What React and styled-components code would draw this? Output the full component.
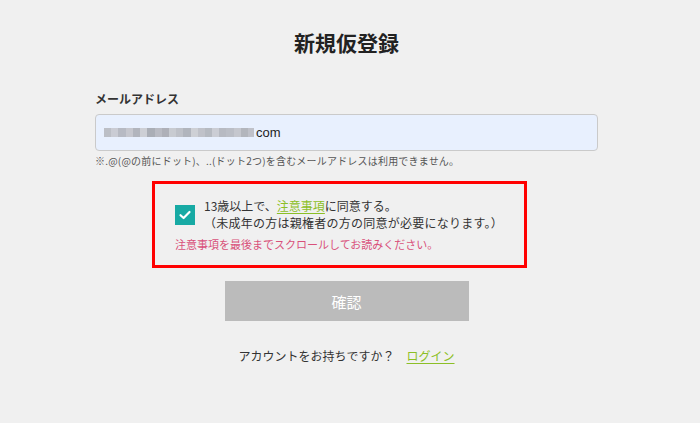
import React from "react";
import styled, { createGlobalStyle } from "styled-components";

const GlobalStyle = createGlobalStyle`
    body {
        margin: 0;
        background: #f0f0f0;
        font-family: "Noto Sans CJK JP", "Noto Sans", sans-serif;
        color: #333;
    }
`;

const Page = styled.div`
    display: flex;
    justify-content: center;
    padding-right: 7px;
    min-height: 423px;
`;
const Wrapper = styled.div`
    width: 503px;
    display: flex;
    flex-direction: column;
`;
const Title = styled.h1`
    margin: 27px 0 0;
    font-size: 21px;
    line-height: 30px;
    font-weight: 700;
    text-align: center;
    color: #222;
`;
const Label = styled.label`
    margin-top: 34px;
    font-size: 12px;
    line-height: 16px;
    font-weight: 700;
    color: #333;
`;
const Input = styled.div`
    margin-top: 7px;
    height: 37px;
    box-sizing: border-box;
    border: 1px solid #cacaca;
    border-radius: 4px;
    background: #e8f0fe;
    display: flex;
    align-items: center;
    padding-left: 8px;
    font-family: "Liberation Sans", Arial, sans-serif;
    font-size: 13px;
    color: #222;
`;
const Mosaic = styled.span`
    display: flex;
    height: 9px;
    margin-right: 2px;
`;
const Tile = styled.span`
    width: ${(p) => p.$w}px;
    height: 9px;
    background: ${(p) => p.$c};
    opacity: 0.85;
`;
const Note = styled.p`
    margin: 3px 0 0;
    font-size: 10px;
    line-height: 14px;
    letter-spacing: 0.2px;
    color: #555;
`;
const AgreeBox = styled.div`
    margin: 13px 0 0 57px;
    width: 375px;
    box-sizing: border-box;
    border: 3px solid #ff0000;
    padding: 13px 20px 13px 20px;
`;
const AgreeRow = styled.div`
    display: flex;
    align-items: center;
    gap: 9px;
`;
const CheckBox = styled.span`
    width: 20px;
    height: 20px;
    flex: none;
    background: #17aaa4;
    display: flex;
    align-items: center;
    justify-content: center;
    margin-top: 2px;
`;
const AgreeText = styled.div`
    font-size: 12px;
    line-height: 17px;
    color: #333;
`;
const SubLine = styled.span`
    letter-spacing: 0.25px;
`;
const GreenLink = styled.a`
    color: #8cbf26;
    text-decoration: underline;
    text-underline-offset: 2px;
    cursor: pointer;
`;
const Warning = styled.p`
    margin: 5px 0 0;
    font-size: 11px;
    line-height: 16px;
    color: #d9507a;
`;
const Button = styled.button`
    margin: 13px auto 0;
    width: 244px;
    height: 40px;
    border: none;
    background: #bbbbbb;
    color: #fff;
    font-family: inherit;
    font-size: 15px;
    cursor: not-allowed;
`;
const Footer = styled.p`
    margin: 26px 0 0;
    text-align: center;
    font-size: 12px;
    line-height: 18px;
    color: #333;
    display: flex;
    justify-content: center;
    gap: 12px;
`;

const tiles = [
    ["#b4b6bc", 7], ["#c4c6cc", 7], ["#aeb0b8", 8], ["#bfc0c6", 7], ["#a8aab2", 7],
    ["#c8c9ce", 7], ["#9fa2a9", 8], ["#b0b2b9", 7], ["#a3a5ac", 7], ["#c2c4c9", 7],
    ["#b6b8be", 7], ["#a7aab1", 8], ["#c9cace", 7], ["#b8bac0", 7], ["#adb0b6", 7],
    ["#c6c7cc", 7], ["#aeb0b7", 7], ["#b3b5bc", 8], ["#bec0c6", 7], ["#a9abb2", 7],
    ["#b7b9bf", 6],
];

const App = () => {
    return (
        <>
            <GlobalStyle />
            <Page>
                <Wrapper>
                    <Title>新規仮登録</Title>
                    <Label>メールアドレス</Label>
                    <Input>
                        <Mosaic>
                            {tiles.map(([c, w], i) => (
                                <Tile key={i} $c={c} $w={w} />
                            ))}
                        </Mosaic>
                        com
                    </Input>
                    <Note>※.@(@の前にドット)、..(ドット2つ)を含むメールアドレスは利用できません。</Note>
                    <AgreeBox>
                        <AgreeRow>
                            <CheckBox>
                                <svg width="14" height="14" viewBox="0 0 14 14">
                                    <path d="M2.5 7.2 L5.6 10 L11.5 4" fill="none" stroke="#fff" strokeWidth="2.2" strokeLinecap="round" strokeLinejoin="round" />
                                </svg>
                            </CheckBox>
                            <AgreeText>
                                13歳以上で、<GreenLink>注意事項</GreenLink>に同意する。
                                <br />
                                <SubLine>（未成年の方は親権者の方の同意が必要になります。）</SubLine>
                            </AgreeText>
                        </AgreeRow>
                        <Warning>注意事項を最後までスクロールしてお読みください。</Warning>
                    </AgreeBox>
                    <Button type="button">確認</Button>
                    <Footer>
                        <span>アカウントをお持ちですか？</span>
                        <GreenLink>ログイン</GreenLink>
                    </Footer>
                </Wrapper>
            </Page>
        </>
    );
};

export default App;
